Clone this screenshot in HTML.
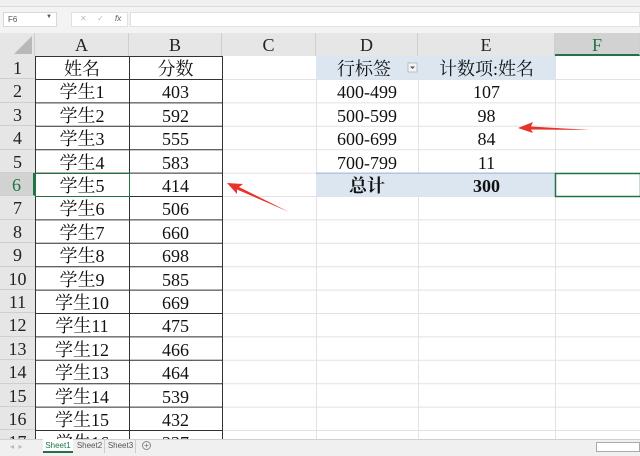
<!DOCTYPE html>
<html><head><meta charset="utf-8"><style>
*{margin:0;padding:0;box-sizing:border-box}
body{width:640px;height:456px;overflow:hidden;background:#fff;position:relative;font-family:"Liberation Serif","Noto Serif CJK SC",serif}
.abs{position:absolute}
.c{position:absolute;text-align:center;font-size:18px;line-height:26px;color:#111;white-space:nowrap}
.ch{position:absolute;top:33px;height:23px;background:#e6e6e6;border-right:1px solid #cfcfcf;text-align:center;font-size:18px;line-height:24px;color:#222}
.rh{position:absolute;left:0;width:35px;background:#e6e6e6;border-bottom:1px solid #cfcfcf;text-align:center;font-size:18px;line-height:25px;color:#222}
.small{font-family:"Liberation Sans",sans-serif;font-size:8px;color:#555}
</style></head><body>
<div class="abs" style="left:0;top:0;width:640px;height:7px;background:#f0f0f0;border-bottom:1px solid #dcdcdc"></div>
<div class="abs" style="left:0;top:7px;width:640px;height:26px;background:#f3f3f3"></div>
<div class="abs" style="left:3px;top:12px;width:54px;height:15px;background:#fff;border:1px solid #d8d8d8"><span class="small" style="position:absolute;left:4px;top:2px">F6</span><span class="small" style="position:absolute;right:4px;top:1px;font-size:6px">▼</span></div>
<div class="abs" style="left:71px;top:12px;width:57px;height:15px;background:#fff;border:1px solid #e0e0e0"><span class="small" style="position:absolute;left:8px;top:1px;color:#bbb">✕</span><span class="small" style="position:absolute;left:25px;top:1px;color:#bbb">✓</span><span class="small" style="position:absolute;left:43px;top:1px;font-style:italic">fx</span></div>
<div class="abs" style="left:130px;top:12px;width:510px;height:15px;background:#fff;border:1px solid #e0e0e0"></div>
<svg class="abs" style="left:0;top:33px" width="640" height="406">
<g stroke="#e2e2e2" stroke-width="1">
<line x1="222.5" y1="23" x2="222.5" y2="406"/><line x1="316.5" y1="23" x2="316.5" y2="406"/><line x1="418.5" y1="23" x2="418.5" y2="406"/><line x1="555.5" y1="23" x2="555.5" y2="406"/>
</g>
<g stroke="#e2e2e2">
<line x1="35" y1="46.5" x2="640" y2="46.5"/><line x1="35" y1="69.9" x2="640" y2="69.9"/><line x1="35" y1="93.3" x2="640" y2="93.3"/><line x1="35" y1="116.7" x2="640" y2="116.7"/><line x1="35" y1="140.1" x2="640" y2="140.1"/><line x1="35" y1="163.5" x2="640" y2="163.5"/><line x1="35" y1="186.9" x2="640" y2="186.9"/><line x1="35" y1="210.3" x2="640" y2="210.3"/><line x1="35" y1="233.7" x2="640" y2="233.7"/><line x1="35" y1="257.1" x2="640" y2="257.1"/><line x1="35" y1="280.5" x2="640" y2="280.5"/><line x1="35" y1="303.9" x2="640" y2="303.9"/><line x1="35" y1="327.3" x2="640" y2="327.3"/><line x1="35" y1="350.7" x2="640" y2="350.7"/><line x1="35" y1="374.1" x2="640" y2="374.1"/><line x1="35" y1="397.5" x2="640" y2="397.5"/>
</g>
<rect x="316" y="23" width="239" height="23.4" fill="#dce6f1"/>
<rect x="316" y="140.1" width="239" height="23.4" fill="#dce6f1"/>
<line x1="316" y1="140.1" x2="555" y2="140.1" stroke="#9bb4d4"/>
<g stroke="#333" stroke-width="1">
<line x1="35" y1="23.5" x2="222" y2="23.5"/>
<line x1="35.5" y1="23" x2="35.5" y2="406"/><line x1="129.5" y1="23" x2="129.5" y2="406"/><line x1="222.5" y1="23" x2="222.5" y2="406"/>
<line x1="35" y1="46.5" x2="222" y2="46.5"/><line x1="35" y1="69.9" x2="222" y2="69.9"/><line x1="35" y1="93.3" x2="222" y2="93.3"/><line x1="35" y1="116.7" x2="222" y2="116.7"/><line x1="35" y1="140.1" x2="222" y2="140.1"/><line x1="35" y1="163.5" x2="222" y2="163.5"/><line x1="35" y1="186.9" x2="222" y2="186.9"/><line x1="35" y1="210.3" x2="222" y2="210.3"/><line x1="35" y1="233.7" x2="222" y2="233.7"/><line x1="35" y1="257.1" x2="222" y2="257.1"/><line x1="35" y1="280.5" x2="222" y2="280.5"/><line x1="35" y1="303.9" x2="222" y2="303.9"/><line x1="35" y1="327.3" x2="222" y2="327.3"/><line x1="35" y1="350.7" x2="222" y2="350.7"/><line x1="35" y1="374.1" x2="222" y2="374.1"/><line x1="35" y1="397.5" x2="222" y2="397.5"/>
</g>
<rect x="35.5" y="140.5" width="94" height="23" fill="none" stroke="#217346" stroke-width="1"/>
<rect x="555.5" y="140.5" width="85" height="23" fill="none" stroke="#217346" stroke-width="1.5"/>
<rect x="408" y="30" width="9" height="9" fill="#f4f4f4" stroke="#aaa" stroke-width="0.7"/>
<path d="M410 33.5 L412.5 36 L415 33.5Z" fill="#555"/>
</svg>
<div class="abs" style="left:0;top:33px;width:35px;height:23px;background:#e6e6e6;border-right:1px solid #cfcfcf"></div>
<svg class="abs" style="left:12px;top:36px" width="22" height="19"><path d="M20 0 L20 18 L2 18Z" fill="#b8b8b8"/></svg>
<div class="ch" style="left:35px;width:94px">A</div>
<div class="ch" style="left:129px;width:93px">B</div>
<div class="ch" style="left:222px;width:94px">C</div>
<div class="ch" style="left:316px;width:102px">D</div>
<div class="ch" style="left:418px;width:137px">E</div>
<div class="ch" style="left:555px;width:85px;background:#d2d2d2;color:#217346;border-bottom:2px solid #217346">F</div>
<div class="abs" style="left:0;top:56px;width:35px;height:383px;background:#e6e6e6;border-right:1px solid #cfcfcf"></div>
<div class="rh" style="top:56px;height:23.4px">1</div><div class="rh" style="top:79.4px;height:23.4px">2</div><div class="rh" style="top:102.8px;height:23.4px">3</div><div class="rh" style="top:126.2px;height:23.4px">4</div><div class="rh" style="top:149.6px;height:23.4px">5</div><div class="rh" style="top:173px;height:23.4px;background:#d2d2d2;color:#217346;border-right:2px solid #217346">6</div><div class="rh" style="top:196.4px;height:23.4px">7</div><div class="rh" style="top:219.8px;height:23.4px">8</div><div class="rh" style="top:243.2px;height:23.4px">9</div><div class="rh" style="top:266.6px;height:23.4px">10</div><div class="rh" style="top:290px;height:23.4px">11</div><div class="rh" style="top:313.4px;height:23.4px">12</div><div class="rh" style="top:336.8px;height:23.4px">13</div><div class="rh" style="top:360.2px;height:23.4px">14</div><div class="rh" style="top:383.6px;height:23.4px">15</div><div class="rh" style="top:407px;height:23.4px">16</div><div class="rh" style="top:430.4px;height:23.4px">17</div>
<div class="c" style="left:35px;width:94px;top:56px">姓名</div>
<div class="c" style="left:35px;width:94px;top:79.4px">学生1</div><div class="c" style="left:35px;width:94px;top:102.8px">学生2</div><div class="c" style="left:35px;width:94px;top:126.2px">学生3</div><div class="c" style="left:35px;width:94px;top:149.6px">学生4</div><div class="c" style="left:35px;width:94px;top:173px">学生5</div><div class="c" style="left:35px;width:94px;top:196.4px">学生6</div><div class="c" style="left:35px;width:94px;top:219.8px">学生7</div><div class="c" style="left:35px;width:94px;top:243.2px">学生8</div><div class="c" style="left:35px;width:94px;top:266.6px">学生9</div><div class="c" style="left:35px;width:94px;top:290px">学生10</div><div class="c" style="left:35px;width:94px;top:313.4px">学生11</div><div class="c" style="left:35px;width:94px;top:336.8px">学生12</div><div class="c" style="left:35px;width:94px;top:360.2px">学生13</div><div class="c" style="left:35px;width:94px;top:383.6px">学生14</div><div class="c" style="left:35px;width:94px;top:407px">学生15</div><div class="c" style="left:35px;width:94px;top:430.4px">学生16</div>
<div class="c" style="left:129px;width:93px;top:56px">分数</div>
<div class="c" style="left:129px;width:93px;top:79.4px">403</div><div class="c" style="left:129px;width:93px;top:102.8px">592</div><div class="c" style="left:129px;width:93px;top:126.2px">555</div><div class="c" style="left:129px;width:93px;top:149.6px">583</div><div class="c" style="left:129px;width:93px;top:173px">414</div><div class="c" style="left:129px;width:93px;top:196.4px">506</div><div class="c" style="left:129px;width:93px;top:219.8px">660</div><div class="c" style="left:129px;width:93px;top:243.2px">698</div><div class="c" style="left:129px;width:93px;top:266.6px">585</div><div class="c" style="left:129px;width:93px;top:290px">669</div><div class="c" style="left:129px;width:93px;top:313.4px">475</div><div class="c" style="left:129px;width:93px;top:336.8px">466</div><div class="c" style="left:129px;width:93px;top:360.2px">464</div><div class="c" style="left:129px;width:93px;top:383.6px">539</div><div class="c" style="left:129px;width:93px;top:407px">432</div><div class="c" style="left:129px;width:93px;top:430.4px">337</div>
<div class="c" style="left:326px;width:76px;top:56px">行标签</div>
<div class="c" style="left:418px;width:137px;top:56px">计数项:姓名</div>
<div class="c" style="left:316px;width:102px;top:79.4px">400-499</div><div class="c" style="left:418px;width:137px;top:79.4px">107</div>
<div class="c" style="left:316px;width:102px;top:102.8px">500-599</div><div class="c" style="left:418px;width:137px;top:102.8px">98</div>
<div class="c" style="left:316px;width:102px;top:126.2px">600-699</div><div class="c" style="left:418px;width:137px;top:126.2px">84</div>
<div class="c" style="left:316px;width:102px;top:149.6px">700-799</div><div class="c" style="left:418px;width:137px;top:149.6px">11</div>
<div class="c" style="left:316px;width:102px;top:173px;font-weight:bold">总计</div><div class="c" style="left:418px;width:137px;top:173px;font-weight:bold">300</div>
<svg class="abs" style="left:0;top:0" width="640" height="456">
<path d="M518 128 L533 122 L531 126.5 L590 130 L531 129.5 L533 133Z" fill="#e8332a"/>
<path d="M227 183 L243 184 L239 187 L289 212 L237 189.5 L237 194Z" fill="#e8332a"/>
</svg>
<div class="abs" style="left:0;top:439px;width:640px;height:17px;background:#f0f0f0;border-top:1px solid #d0d0d0"></div>
<div class="abs small" style="left:10px;top:442px;color:#bbb">◂ &nbsp;▸</div>
<div class="abs small" style="left:43px;top:439px;width:30px;height:14px;background:#fff;color:#217346;text-align:center;line-height:13px;border-bottom:2px solid #217346">Sheet1</div>
<div class="abs small" style="left:75px;top:439px;width:30px;height:14px;text-align:center;line-height:13px;border-right:1px solid #ccc">Sheet2</div>
<div class="abs small" style="left:106px;top:439px;width:30px;height:14px;text-align:center;line-height:13px;border-right:1px solid #ccc">Sheet3</div>
<div class="abs" style="left:142px;top:441px;width:9px;height:9px;border:1px solid #888;border-radius:50%;font-size:8px;line-height:7px;text-align:center;color:#666;font-family:'Liberation Sans',sans-serif">+</div>
<div class="abs" style="left:596px;top:442px;width:44px;height:10px;background:#fff;border:1px solid #aaa"></div>
</body></html>
